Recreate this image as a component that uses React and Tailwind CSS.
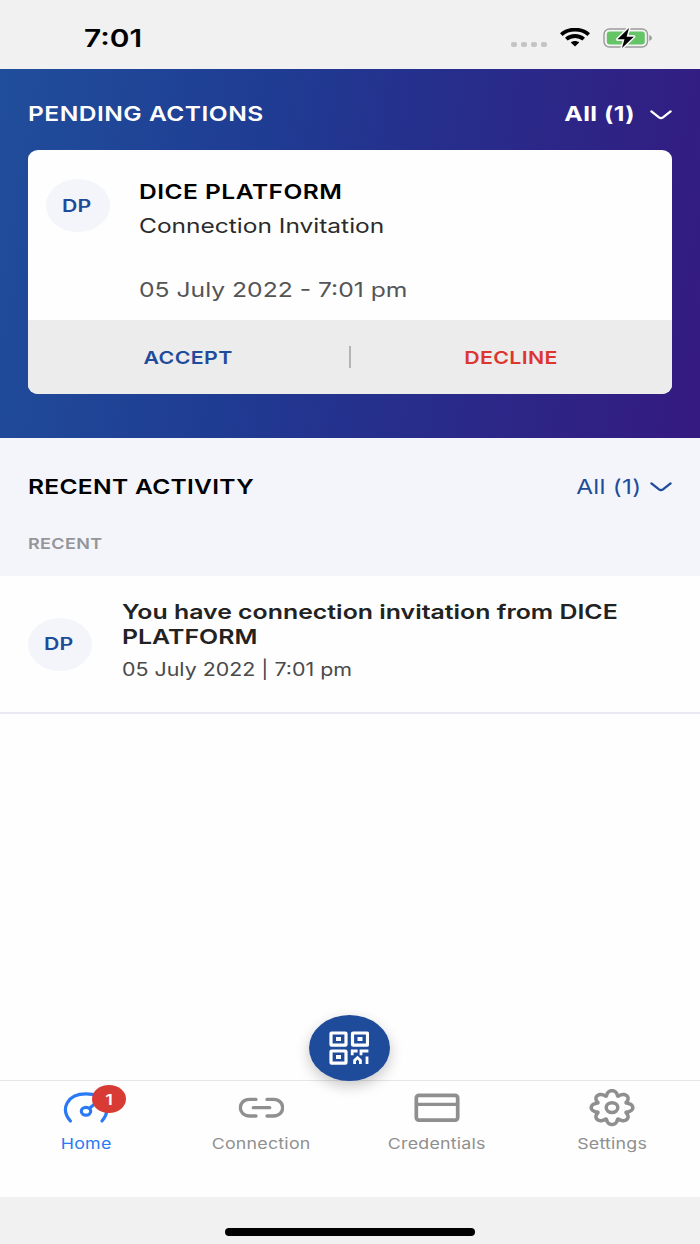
import React, { useState } from "react";

const Label = ({ children, className = "" }) => (
  <span className={`inline-block whitespace-nowrap ${className}`}>{children}</span>
);

const Chevron = () => (
  <svg width="22" height="10" viewBox="0 0 22 10" fill="none" stroke="currentColor" strokeWidth="2.3">
    <path d="M1.4 1.4 L9 7.4 Q11 8.9 13 7.4 L20.6 1.4" strokeLinecap="round" strokeLinejoin="round" />
  </svg>
);

const Avatar = ({ initials }) => (
  <div className="w-[64.5px] h-[53px] shrink-0 rounded-[50%] bg-[#f3f5fa] flex items-center justify-center pr-[2px] pt-px text-[#1f4b9b] text-[17px] leading-none font-semibold">
    <Label className="scale-x-[1.25]">{initials}</Label>
  </div>
);

const WifiIcon = () => (
  <svg width="30" height="19" viewBox="0 0 30 19" fill="none" stroke="#000" strokeWidth="3.8">
    <path d="M1.3 6.6 C8.5 0 21.5 0 28.7 6.6" />
    <path d="M6.3 11.2 C11 6.9 19 6.9 23.7 11.2" />
    <path d="M10.8 14.6 C13.2 12.6 16.8 12.6 19.2 14.6 L15 18.4 Z" fill="#000" stroke="none" />
  </svg>
);

const BatteryIcon = () => (
  <svg width="50" height="22" viewBox="0 0 50 22">
    <rect x="1" y="2" width="43.5" height="18" rx="5.5" fill="#f4f4f4" stroke="#9b9b9b" strokeWidth="1.4" />
    <rect x="3.8" y="4.5" width="38" height="13" rx="3" fill="#65c466" />
    <path d="M46.3 8 Q49 9 49 11 Q49 13 46.3 14 Z" fill="#9b9b9b" />
    <path
      d="M26 1 L14.5 12.3 H21.5 L19 21 L30.8 9.7 H23.6 Z"
      fill="#000"
      stroke="#f4f4f4"
      strokeWidth="3.2"
      paintOrder="stroke"
      strokeLinejoin="round"
    />
  </svg>
);

const QrIcon = () => (
  <svg width="40" height="34" viewBox="0 0 40 34" fill="none" stroke="#fff" strokeWidth="3.2">
    <rect x="2" y="2" width="15" height="12.2" rx="0.6" />
    <rect x="23.5" y="2" width="15" height="12.2" rx="0.6" />
    <rect x="2" y="20" width="15" height="12.2" rx="0.6" />
    <path d="M7 8.1 H12 M28.5 8.1 H33.5 M7 26.1 H12" strokeWidth="4" />
    <path d="M23.2 24.2 V20 H28.6 M32 24.2 V20 H39.4 M25.6 33 V29.4 L28.5 26.6 L31.4 29.4 V33 M38 25.6 V33" strokeWidth="2.8" />
  </svg>
);

const HomeIcon = () => (
  <svg width="46" height="38" viewBox="0 0 46 38" fill="none" stroke="currentColor" strokeWidth="3.2" strokeLinecap="round">
    <path d="M7.4 32 C-3 20 4 4.9 23 4.9 C42 4.9 49.2 20 39 32" />
    <ellipse cx="23" cy="22.3" rx="4.7" ry="3.9" />
    <path d="M26.6 19.2 L32 14.6" />
  </svg>
);

const LinkIcon = () => (
  <svg width="46" height="38" viewBox="0 0 46 38" fill="none" stroke="currentColor" strokeWidth="3.3" strokeLinecap="round">
    <path d="M18 10.4 H11.5 C-0.7 10.4 -0.7 27 11.5 27 H18" />
    <path d="M29 10.4 H35.5 C47.7 10.4 47.7 27 35.5 27 H29" />
    <path d="M15.3 18.7 H31.7" />
  </svg>
);

const CardIcon = () => (
  <svg width="46" height="38" viewBox="0 0 46 38" fill="none" stroke="currentColor" strokeWidth="3.7">
    <rect x="2.3" y="6.3" width="41.4" height="24.8" rx="2.6" />
    <path d="M2 15.4 H44" strokeWidth="3.2" />
  </svg>
);

// eight rounded lobes around the centre, the sine term makes them bulge
const gearPoints = Array.from({ length: 192 }, (_, i) => {
  const step = (i / 192) * Math.PI * 2;
  const angle = step + 0.07 * Math.sin(8 * step);
  const radius = 0.865 + 0.135 * Math.cos(8 * step);
  const x = 23 + 20.8 * radius * Math.cos(angle);
  const y = 18.6 + 16.9 * radius * Math.sin(angle);
  return `${x.toFixed(2)},${y.toFixed(2)}`;
}).join(" ");

const GearIcon = () => (
  <svg width="46" height="38" viewBox="0 0 46 38" fill="none" stroke="currentColor" strokeWidth="3.5" strokeLinejoin="round">
    <polygon points={gearPoints} />
    <ellipse cx="23" cy="18.6" rx="5.8" ry="4.9" />
  </svg>
);

const tabs = [
  { name: "Home", icon: <HomeIcon />, badge: 1 },
  { name: "Connection", icon: <LinkIcon /> },
  { name: "Credentials", icon: <CardIcon /> },
  { name: "Settings", icon: <GearIcon /> },
];

const App = () => {
  const [activeTab, setActiveTab] = useState("Home");

  return (
    <div className="relative w-[700px] h-[1244px] flex flex-col overflow-hidden bg-[#fefefe] font-[Inter,sans-serif]">
      <div className="h-[69px] shrink-0 bg-[#f1f1f1] flex items-center pt-[7px] pl-[84px] pr-[47px]">
        <Label className="text-[24.5px] leading-none font-semibold origin-left scale-x-[1.22]">7:01</Label>
        <div className="ml-auto flex items-center">
          <div className="flex gap-1 mt-[12px] mr-[13px]">
            {[0, 1, 2, 3].map((dot) => (
              <div key={dot} className="w-[6px] h-[5px] rounded-[2px] bg-[#c4c4c4]" />
            ))}
          </div>
          <div className="-mt-px">
            <WifiIcon />
          </div>
          <div className="ml-[13px] -mt-px">
            <BatteryIcon />
          </div>
        </div>
      </div>

      <section className="h-[369px] shrink-0 pl-[27.5px] pr-[28.5px] bg-[linear-gradient(100deg,#204e9b_0%,#1f3c93_36%,#25308d_55%,#351a80_100%)]">
        <div className="h-[81px] pt-[9px] flex items-center text-white text-[20.3px] leading-none">
          <Label className="font-semibold tracking-[0.4px] origin-left scale-x-[1.21]">PENDING ACTIONS</Label>
          <button className="ml-auto flex items-center gap-[14px] font-bold">
            <Label className="tracking-[0.4px] origin-right scale-x-[1.22]">All (1)</Label>
            <div className="pt-[2px]">
              <Chevron />
            </div>
          </button>
        </div>
        <div className="h-[244px] rounded-[10px/9px] overflow-hidden bg-[#fefefe] flex flex-col">
          <div className="h-[170px] pl-[18px] pt-[29px] flex">
            <Avatar initials="DP" />
            <div className="ml-[29px] flex flex-col items-start text-[20.3px]">
              <Label className="leading-[26px] font-semibold text-black tracking-[0.4px] origin-left scale-x-[1.21]">DICE PLATFORM</Label>
              <Label className="mt-2 leading-[26px] text-[#2b2b2b] origin-left scale-x-[1.208]">Connection Invitation</Label>
              <Label className="mt-[38px] leading-[26px] text-[#555] origin-left scale-x-[1.216]">05 July 2022 - 7:01 pm</Label>
            </div>
          </div>
          <div className="flex-1 bg-[#ececec] flex items-center text-[17.8px] leading-none font-semibold">
            <button className="flex-1 pt-px text-[#1f4b9b]">
              <Label className="tracking-[0.3px] scale-x-[1.2]">ACCEPT</Label>
            </button>
            <div className="w-[2px] h-[22px] bg-[#b4b4b4]" />
            <button className="flex-1 pt-px text-[#dc3630]">
              <Label className="tracking-[0.3px] scale-x-[1.2]">DECLINE</Label>
            </button>
          </div>
        </div>
      </section>

      <section className="h-[138px] shrink-0 pl-[27.5px] pr-[28.5px] bg-[#f3f5fa]">
        <div className="h-[97px] pt-px flex items-center text-[20.3px] leading-none">
          <Label className="font-semibold text-black tracking-[0.25px] origin-left scale-x-[1.21]">RECENT ACTIVITY</Label>
          <button className="ml-auto flex items-center gap-[8px] text-[#1f4b9b]">
            <Label className="tracking-[0.25px] origin-right scale-x-[1.2]">All (1)</Label>
            <Chevron />
          </button>
        </div>
        <div className="text-[15px] leading-[17px] font-semibold text-[#949599]">
          <Label className="tracking-[0.3px] origin-left scale-x-[1.2]">RECENT</Label>
        </div>
      </section>

      <div className="h-[138px] shrink-0 pl-[27.5px] flex items-center border-b-2 border-[#e9e9f6]">
        <Avatar initials="DP" />
        <div className="ml-[29.5px] mb-[7px] flex flex-col items-start text-[#222]">
          <Label className="text-[20.3px] leading-[25px] font-semibold origin-left scale-x-[1.226]">
            You have connection invitation from DICE
            <br />
            PLATFORM
          </Label>
          <Label className="mt-[8px] text-[18px] leading-[26px] text-[#4a4a4a] origin-left scale-x-[1.188]">
            05 July 2022 | 7:01 pm
          </Label>
        </div>
      </div>

      <div className="flex-1" />

      <nav className="relative h-[117px] shrink-0 border-t border-[#e6e6e6]">
        <div className="-ml-[2px] grid grid-cols-4">
          {tabs.map((tab) => (
            <button
              key={tab.name}
              onClick={() => setActiveTab(tab.name)}
              className={`flex flex-col items-center pt-2 ${activeTab === tab.name ? "text-[#2a7af5]" : "text-[#8f8f8f]"}`}
            >
              <div className="relative h-[38px]">
                {tab.icon}
                {tab.badge && (
                  <span className="absolute left-[29px] -top-1 w-[34px] h-[28px] rounded-[50%] bg-[#d83a34] text-white text-[15px] leading-none font-semibold flex items-center justify-center">
                    <Label className="scale-x-[1.2]">{tab.badge}</Label>
                  </span>
                )}
              </div>
              <Label className="mt-2 text-[14.8px] leading-[18px] tracking-[0.2px] scale-x-[1.2]">{tab.name}</Label>
            </button>
          ))}
        </div>
        <button className="absolute left-[308.5px] -top-[66px] w-[81px] h-[66px] rounded-[50%] bg-[#1f4b9b] shadow-[0_5px_14px_rgba(0,0,0,0.22)] flex items-center justify-center">
          <QrIcon />
        </button>
      </nav>

      <div className="h-[47px] shrink-0 bg-[#f1f1f1] flex justify-center pt-[31px]">
        <div className="w-[250px] h-[8px] rounded-full bg-black" />
      </div>
    </div>
  );
};

export default App;
